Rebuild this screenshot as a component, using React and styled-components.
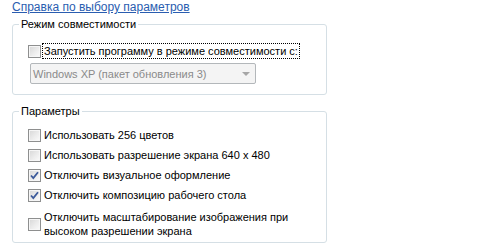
import React from "react";
import styled, { createGlobalStyle } from "styled-components";

const Global = createGlobalStyle`
  html, body {
    margin: 0;
    padding: 0;
    background: #ffffff;
  }
  body {
    font-family: "Liberation Sans", Arial, sans-serif;
    font-size: 11px;
    color: #000000;
  }
`;

const Page = styled.div`
  width: 479px;
  height: 247px;
  overflow: hidden;
  padding-left: 12px;
  box-sizing: border-box;
`;

const HelpLink = styled.a`
  display: block;
  width: max-content;
  font-size: 12px;
  line-height: 15px;
  color: #2a5db0;
  text-decoration: underline;
  cursor: pointer;
`;

const Group = styled.fieldset`
  width: 315px;
  box-sizing: border-box;
  margin: ${(p) => p.$top}px 0 0 0;
  padding: ${(p) => p.$pad};
  border: 1px solid #d5dfe5;
  border-radius: 3px;
`;

const Legend = styled.legend`
  padding: 0 2px;
  margin-left: -9px;
  line-height: 14px;
`;

const Stack = styled.div`
  display: flex;
  flex-direction: column;
  gap: ${(p) => p.$gap}px;
`;

const Row = styled.label`
  display: flex;
  align-items: center;
  gap: 1px;
  line-height: 14px;
  margin-top: ${(p) => p.$extra || 0}px;
`;

const Box = styled.span`
  flex: none;
  width: 13px;
  height: 13px;
  box-sizing: border-box;
  border: 1px solid #8e8f8f;
  background: linear-gradient(135deg, #d6d6d6 0%, #ececec 55%, #fbfbfb 100%);
  box-shadow: inset 0 0 0 1px #f6f6f6;
  display: flex;
  align-items: center;
  justify-content: center;
`;

const Caption = styled.span`
  padding: 0 1px;
  border: 1px dotted ${(p) => (p.$focus ? "#000" : "transparent")};
  margin: -1px 0;
`;

const Select = styled.div`
  width: 226px;
  height: 21px;
  box-sizing: border-box;
  margin-left: 2px;
  border: 1px solid #b3b7ba;
  border-radius: 2px;
  background: #f4f4f4;
  color: #8a8a8a;
  display: flex;
  align-items: center;
  justify-content: space-between;
  padding: 0 5px 0 2px;
`;

const Arrow = styled.span`
  width: 0;
  height: 0;
  border-left: 4px solid transparent;
  border-right: 4px solid transparent;
  border-top: 4px solid #a6a6a6;
`;

function Check({ checked }) {
  return (
    <Box>
      {checked && (
        <svg width="9" height="9" viewBox="0 0 9 9">
          <path
            d="M1 4.5 L3.3 7 L8 1.2"
            fill="none"
            stroke="#3c5a9a"
            strokeWidth="1.8"
          />
        </svg>
      )}
    </Box>
  );
}

const options = [
  { text: "Использовать 256 цветов", checked: false },
  { text: "Использовать разрешение экрана 640 x 480", checked: false },
  { text: "Отключить визуальное оформление", checked: true },
  { text: "Отключить композицию рабочего стола", checked: true },
];

export default function App() {
  return (
    <Page>
      <Global />
      <HelpLink>Справка по выбору параметров</HelpLink>

      <Group $top={2} $pad="13px 0 10px 15px">
        <Legend>Режим совместимости</Legend>
        <Stack $gap={5}>
          <Row>
            <Check />
            <Caption $focus>Запустить программу в режиме совместимости с:</Caption>
          </Row>
          <Select>
            <span>Windows XP (пакет обновления 3)</span>
            <Arrow />
          </Select>
        </Stack>
      </Group>

      <Group $top={9} $pad="10px 0 4px 15px">
        <Legend>Параметры</Legend>
        <Stack $gap={6}>
          {options.map((o) => (
            <Row key={o.text}>
              <Check checked={o.checked} />
              <Caption>{o.text}</Caption>
            </Row>
          ))}
          <Row $extra={2}>
            <Check />
            <Caption>
              Отключить масштабирование изображения при
              <br />
              высоком разрешении экрана
            </Caption>
          </Row>
        </Stack>
      </Group>
    </Page>
  );
}
